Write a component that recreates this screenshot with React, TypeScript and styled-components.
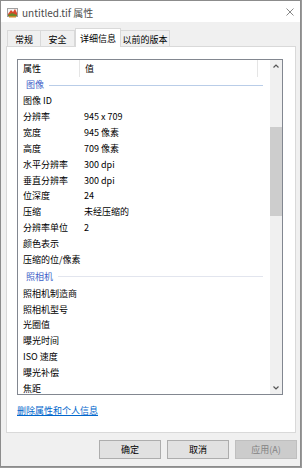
import React from "react";
import styled, { createGlobalStyle } from "styled-components";

const Global = createGlobalStyle`
  *, *::before, *::after {
    box-sizing: border-box;
  }
  html, body {
    margin: 0;
    padding: 0;
    background: #9a9a9a;
  }
  body {
    font-family: "Noto Sans CJK SC", "Liberation Sans", sans-serif;
    font-size: 9px;
    color: #000;
  }
`;

interface Row {
  name: string;
  value?: string;
  group?: boolean;
}

const rows: Row[] = [
  { name: "图像", group: true },
  { name: "图像 ID" },
  { name: "分辨率", value: "945 x 709" },
  { name: "宽度", value: "945 像素" },
  { name: "高度", value: "709 像素" },
  { name: "水平分辨率", value: "300 dpi" },
  { name: "垂直分辨率", value: "300 dpi" },
  { name: "位深度", value: "24" },
  { name: "压缩", value: "未经压缩的" },
  { name: "分辨率单位", value: "2" },
  { name: "颜色表示" },
  { name: "压缩的位/像素" },
  { name: "照相机", group: true },
  { name: "照相机制造商" },
  { name: "照相机型号" },
  { name: "光圈值" },
  { name: "曝光时间" },
  { name: "ISO 速度" },
  { name: "曝光补偿" },
  { name: "焦距" },
];

// tab label + outer width in px
const tabs: [string, number][] = [
  ["常规", 34],
  ["安全", 34],
  ["详细信息", 46],
  ["以前的版本", 49],
];

function FileIcon() {
  return (
    <svg width="11" height="11" viewBox="0 0 11 11">
      <rect x="0.5" y="1.5" width="10" height="8" fill="#f4f4f4" stroke="#a0a0a0" />
      <path d="M1 7 L4 3 L6 5 L8 2 L10 6 L10 9 L1 9 Z" fill="#d9482b" />
      <path d="M1 8 L5 6 L10 8 L10 9 L1 9 Z" fill="#6a8a2a" />
      <rect x="2" y="9" width="7" height="1.5" fill="#c98a2a" />
    </svg>
  );
}

export default function App() {
  return (
    <>
      <Global />
      <Window>
        <TitleBar>
          <FileIcon />
          <Title>untitled.tif 属性</Title>
          <Close>
            <svg width="8" height="8" viewBox="0 0 8 8">
              <path d="M0.5 0.5 L7.5 7.5 M7.5 0.5 L0.5 7.5" stroke="#7a7a7a" strokeWidth="0.9" />
            </svg>
          </Close>
        </TitleBar>
        <Body>
          <TabStrip>
            {tabs.map(([t, w], i) => (
              <Tab key={t} active={i === 2} first={i === 0} width={w}>
                {t}
              </Tab>
            ))}
          </TabStrip>
          <Panel>
            <ListBox>
              <ListMain>
                <Header>
                  <HeadCell width={62}>属性</HeadCell>
                  <HeadCell width={178}>值</HeadCell>
                  <HeadCell width={12} />
                </Header>
                {rows.map((r, i) =>
                  r.group ? (
                    <GroupRow key={r.name} tall={i > 0}>
                      <GroupName>{r.name}</GroupName>
                      <GroupLine faint={i > 0} />
                    </GroupRow>
                  ) : (
                    <DataRow key={r.name}>
                      <NameCell>{r.name}</NameCell>
                      <ValueCell>{r.value}</ValueCell>
                    </DataRow>
                  )
                )}
              </ListMain>
              <ScrollBar>
                <Arrow>
                  <svg width="6" height="4" viewBox="0 0 6 4">
                    <path d="M0.5 3.5 L3 1 L5.5 3.5" stroke="#555" strokeWidth="1.2" fill="none" />
                  </svg>
                </Arrow>
                <Track>
                  <Thumb />
                </Track>
                <Arrow>
                  <svg width="6" height="4" viewBox="0 0 6 4">
                    <path d="M0.5 0.5 L3 3 L5.5 0.5" stroke="#555" strokeWidth="1.2" fill="none" />
                  </svg>
                </Arrow>
              </ScrollBar>
            </ListBox>
            <Link>删除属性和个人信息</Link>
          </Panel>
          <Buttons>
            <Button>确定</Button>
            <Button>取消</Button>
            <Button disabled>应用(A)</Button>
          </Buttons>
        </Body>
      </Window>
    </>
  );
}

const Window = styled.div`
  width: 301px;
  height: 467px;
  border: 1px solid #8c8c8c;
  background: #f0f0f0;
  display: flex;
  flex-direction: column;
  overflow: hidden;
`;

const TitleBar = styled.div`
  height: 21px;
  background: #fff;
  display: flex;
  align-items: center;
  padding: 1px 6px 0 6px;
  flex-shrink: 0;
`;

const Title = styled.div`
  margin-left: 4px;
  color: #4a4a4a;
  font-size: 10px;
  flex: 1;
  white-space: nowrap;
`;

const Close = styled.div`
  display: flex;
  align-items: center;
`;

const Body = styled.div`
  flex: 1;
  display: flex;
  flex-direction: column;
  padding: 6px 4px 0 5px;
`;

const TabStrip = styled.div`
  display: flex;
  align-items: flex-end;
  height: 18px;
  padding-left: 1px;
  position: relative;
  z-index: 1;
  flex-shrink: 0;
`;

const Tab = styled.div<{ active?: boolean; first?: boolean; width: number }>`
  width: ${(p) => p.width}px;
  height: ${(p) => (p.active ? "19px" : "16px")};
  margin-bottom: ${(p) => (p.active ? "-1px" : "0")};
  background: ${(p) => (p.active ? "#fff" : "#f0f0f0")};
  border: 1px solid #d9d9d9;
  border-bottom: none;
  border-left: ${(p) => (p.active || p.first ? "1px solid #d9d9d9" : "none")};
  display: flex;
  align-items: center;
  justify-content: center;
  padding-top: ${(p) => (p.active ? "0" : "1px")};
  white-space: nowrap;
`;

const Panel = styled.div`
  height: 387px;
  flex-shrink: 0;
  background: #fff;
  border: 1px solid #d9d9d9;
  padding: 12px 0 0 10px;
  display: flex;
  flex-direction: column;
`;

const ListBox = styled.div`
  width: 266px;
  height: 336px;
  border: 1px solid #828790;
  display: flex;
  overflow: hidden;
`;

const ListMain = styled.div`
  flex: 1;
  overflow: hidden;
`;

const Header = styled.div`
  display: flex;
  height: 17px;
`;

const HeadCell = styled.div<{ width: number }>`
  width: ${(p) => p.width}px;
  flex-shrink: 0;
  padding-left: 5px;
  border-right: 1px solid #e5e5e5;
  line-height: 17px;
  &:last-child {
    border-right: none;
  }
`;

const GroupRow = styled.div<{ tall?: boolean }>`
  display: flex;
  align-items: center;
  height: ${(p) => (p.tall ? "18px" : "16px")};
  padding-top: ${(p) => (p.tall ? "1px" : "0")};
  padding-left: 8px;
  padding-right: 7px;
`;

const GroupName = styled.div`
  color: #3e5fc8;
  line-height: 16px;
`;

const GroupLine = styled.div<{ faint?: boolean }>`
  flex: 1;
  height: 1px;
  margin-left: 5px;
  background: ${(p) => (p.faint ? "#e2e5ee" : "#b9cde8")};
`;

const DataRow = styled.div`
  display: flex;
  height: 15.85px;
  align-items: center;
`;

const NameCell = styled.div`
  width: 62px;
  padding-left: 5px;
  white-space: nowrap;
`;

const ValueCell = styled.div`
  padding-left: 4px;
  white-space: nowrap;
`;

const ScrollBar = styled.div`
  width: 12px;
  background: #f0f0f0;
  display: flex;
  flex-direction: column;
`;

const Arrow = styled.div`
  height: 12px;
  display: flex;
  align-items: center;
  justify-content: center;
`;

const Track = styled.div`
  flex: 1;
  padding-top: 55px;
`;

const Thumb = styled.div`
  height: 89px;
  background: #cdcdcd;
`;

const Link = styled.a`
  margin-top: 9px;
  color: #0066cc;
  text-decoration: underline;
  line-height: 14px;
  align-self: flex-start;
  cursor: pointer;
`;

const Buttons = styled.div`
  display: flex;
  justify-content: flex-end;
  gap: 6px;
  margin-top: 7px;
  margin-right: -1px;
`;

const Button = styled.button`
  width: 62px;
  height: 19px;
  padding: 0;
  font-family: inherit;
  font-size: 9px;
  background: ${(p) => (p.disabled ? "#cccccc" : "#e1e1e1")};
  border: 1px solid ${(p) => (p.disabled ? "#bfbfbf" : "#adadad")};
  color: ${(p) => (p.disabled ? "#838383" : "#000")};
`;
